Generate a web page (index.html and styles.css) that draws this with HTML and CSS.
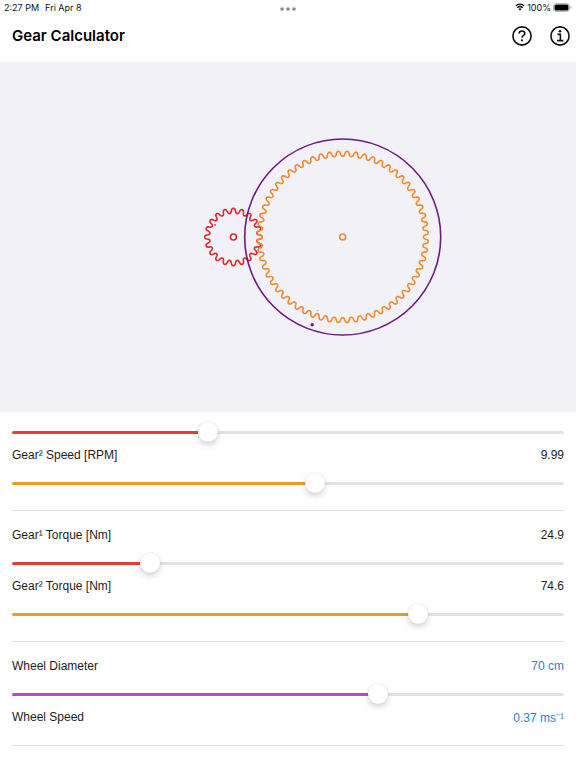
FILE: index.html
```html
<!DOCTYPE html>
<html lang="en">
<head>
    <meta charset="UTF-8">
    <meta name="viewport" content="width=device-width, initial-scale=1.0">
    <title>Gear Calculator</title>
    <link rel="stylesheet" href="styles.css">
</head>
<body>

    <div class="status-bar">
        <div class="status-left">
            <span>2:27 PM</span>
            <span>Fri Apr 8</span>
        </div>
        <svg class="dots" width="16" height="4" viewBox="0 0 16 4" aria-hidden="true">
            <circle cx="2" cy="2" r="1.8"/>
            <circle cx="8" cy="2" r="1.8"/>
            <circle cx="14" cy="2" r="1.8"/>
        </svg>
        <div class="status-right">
            <svg width="10" height="8" viewBox="0 0 20 16" aria-hidden="true">
                <path d="M1.5 5.8a12.2 12.2 0 0 1 17 0M4.8 9.4a7.6 7.6 0 0 1 10.4 0" fill="none" stroke="#000" stroke-width="2.6"/>
                <path d="M6.9 11.9a4.6 4.6 0 0 1 6.2 0L10 15.2z"/>
            </svg>
            <span>100%</span>
            <svg width="19" height="9" viewBox="0 0 38 18" aria-hidden="true">
                <rect x="1" y="1" width="32" height="16" rx="5" fill="none" stroke="#aaa" stroke-width="1.6"/>
                <rect x="3" y="3" width="28" height="12" rx="3.2"/>
                <path d="M35 6c3 1 3 5 0 6z" fill="#aaa"/>
            </svg>
        </div>
    </div>

    <header class="header">
        <h1>Gear Calculator</h1>
        <div class="header-buttons">
            <button class="icon-btn" aria-label="Help">
                <svg width="20" height="20" viewBox="0 0 20 20">
                    <circle cx="10" cy="10" r="9.1"/>
                    <path d="M7.2 7.5c0-1.6 1.2-2.5 2.8-2.5s2.8 1 2.8 2.4c0 2.1-2.8 2.1-2.8 4.4"/>
                    <circle class="dot" cx="10" cy="14.3" r="1.1"/>
                </svg>
            </button>
            <button class="icon-btn" aria-label="Info">
                <svg width="20" height="20" viewBox="0 0 20 20">
                    <circle cx="10" cy="10" r="9.1"/>
                    <path d="M7.5 8.4h2.9v6.1M7 14.6h6.4"/>
                    <circle class="dot" cx="10" cy="5.3" r="1.3"/>
                </svg>
            </button>
        </div>
    </header>

    <svg class="gears" viewBox="0 0 576 350" role="img" aria-label="Two meshed gears and a wheel">
        <g stroke="#dd2a2c">
            <path id="gear1"/>
            <circle cx="233.4" cy="175" r="3"/>
            <circle cx="215" cy="163" r="0.3"/>
        </g>
        <g stroke="#6e1a7e">
            <circle cx="342.7" cy="175" r="98"/>
            <circle cx="312.2" cy="262.7" r="0.9"/>
        </g>
        <g stroke="#f08a30">
            <path id="gear2"/>
            <circle cx="342.7" cy="175" r="3"/>
            <circle cx="317.2" cy="248.7" r="0.4" stroke-width="0.8"/>
        </g>
    </svg>

    <main class="controls">
        <input type="range" class="slider red" value="35" style="--fill: 35%" aria-label="Gear 1 Speed [RPM]">
        <div class="row">
            <label for="speed2">Gear² Speed [RPM]</label>
            <output for="speed2">9.99</output>
        </div>
        <input type="range" id="speed2" class="slider orange" value="55" style="--fill: 55%">

        <hr>

        <div class="row">
            <label for="torque1">Gear¹ Torque [Nm]</label>
            <output for="torque1">24.9</output>
        </div>
        <input type="range" id="torque1" class="slider red" value="24" style="--fill: 24%">
        <div class="row">
            <label for="torque2">Gear² Torque [Nm]</label>
            <output for="torque2">74.6</output>
        </div>
        <input type="range" id="torque2" class="slider orange" step="any" value="74.4" style="--fill: 74.4%">

        <hr>

        <div class="row">
            <label for="diameter">Wheel Diameter</label>
            <button class="unit-btn">70 cm</button>
        </div>
        <input type="range" id="diameter" class="slider purple" value="67" style="--fill: 67%">
        <div class="row">
            <span>Wheel Speed</span>
            <button class="unit-btn">0.37 ms⁻¹</button>
        </div>

        <hr>
    </main>

    <script src="script.js"></script>
</body>
</html>
```
FILE: styles.css
```css
* {
    box-sizing: border-box;
}

body {
    margin: 0;
    font-family: "Liberation Sans", Arial, sans-serif;
    font-size: 12px;
    color: #1c1c1e;
    background-color: white;
}

button {
    padding: 0;
    border: none;
    background: none;
    font: inherit;
    cursor: pointer;
}

.status-bar {
    display: grid;
    grid-template-columns: 1fr auto 1fr;
    align-items: center;
    height: 14px;
    padding: 0 4px;
    font-family: Inter, sans-serif;
    font-size: 9px;
    color: #111;
}

.status-left {
    display: flex;
    gap: 6px;
}

.dots {
    margin-top: 4px;
    fill: #888;
}

.status-right {
    display: flex;
    align-items: center;
    justify-content: flex-end;
    gap: 2px;
}

.header {
    display: flex;
    align-items: center;
    justify-content: space-between;
    height: 48px;
    padding: 0 6px 5px 12px;
}

.header h1 {
    margin: 0;
    font-family: Inter, sans-serif;
    font-size: 15px;
    font-weight: 600;
    color: black;
}

.header-buttons {
    display: flex;
    gap: 18px;
}

.icon-btn svg {
    display: block;
    fill: none;
    stroke: #111;
    stroke-width: 1.6;
}

.icon-btn .dot {
    fill: #111;
    stroke: none;
}

.gears {
    display: block;
    width: 100%;
    background-color: #f2f1f7;
    fill: none;
    stroke-width: 1.6;
}

.controls {
    padding: 10px 12px;
}

.row {
    display: flex;
    align-items: center;
    justify-content: space-between;
    height: 22px;
    margin: 2px 0 7px;
}

hr {
    height: 1px;
    margin: 17px 0 13px;
    border: none;
    background-color: #e5e5e7;
}

.slider {
    display: block;
    width: 100%;
    height: 20px;
    margin: 0;
    appearance: none;
    background: none;
}

.slider::-webkit-slider-runnable-track {
    height: 3px;
    border-radius: 2px;
    background: linear-gradient(to right, var(--color) var(--fill), #e3e3e6 var(--fill));
}

.slider::-webkit-slider-thumb {
    appearance: none;
    width: 20px;
    height: 20px;
    margin-top: -9px;
    border-radius: 50%;
    background-color: white;
    box-shadow: 0 3px 6px rgba(0, 0, 0, 0.18), 0 0 1px rgba(0, 0, 0, 0.15);
}

.red {
    --color: #e6403c;
}

.orange {
    --color: #ec9a2c;
}

.purple {
    --color: #a850cc;
}

.unit-btn {
    color: #2f7fcb;
}
```
FILE: script.js
```js
// wavy tooth outline, the flanks get steeper with the sin(2 * phase) term
function gearPath(cx, cy, radius, depth, teeth, start) {
    const steps = teeth * 24;
    let d = "";

    for (let i = 0; i < steps; i++) {
        const phase = (i / 24) * 2 * Math.PI;
        const angle = start + (phase + 0.25 * Math.sin(2 * phase)) / teeth;
        const r = radius + depth * Math.cos(phase);
        const x = cx + r * Math.cos(angle);
        const y = cy + r * Math.sin(angle);
        d += (i ? "L" : "M") + x.toFixed(2) + " " + y.toFixed(2);
    }

    return d + "Z";
}

document.getElementById("gear1").setAttribute("d", gearPath(233.4, 175, 26.2, 2.5, 20, 0));
document.getElementById("gear2").setAttribute("d", gearPath(342.7, 175, 83.2, 2.5, 60, Math.PI / 60));
```
